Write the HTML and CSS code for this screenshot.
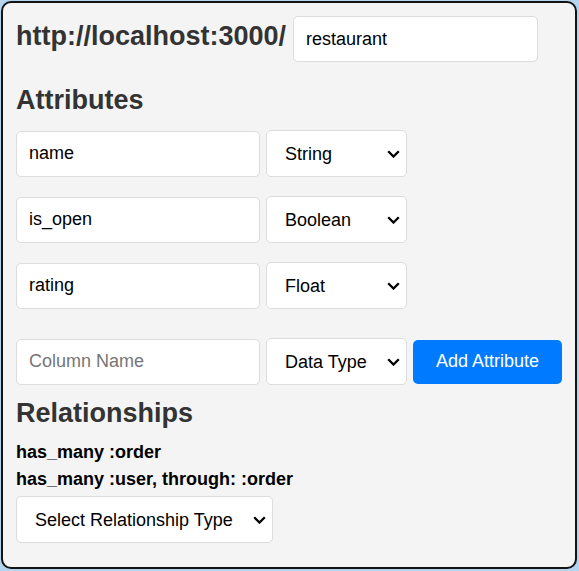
FILE: index.html
```html
<!DOCTYPE html>
<html lang="en">
<head>
<meta charset="utf-8">
<title>Model Editor</title>
<link rel="stylesheet" href="styles.css">
</head>
<body>
  <div class="card">
    <div class="title-row">
      <h1 class="url">http://localhost:3000/</h1>
      <input class="field model-name" type="text" value="restaurant">
    </div>

    <h2 class="heading attrs-heading">Attributes</h2>

    <div class="attr-row">
      <input class="field col-name" type="text" value="name">
      <span class="select-wrap type-wrap">
        <select class="field type-select">
          <option>String</option>
          <option>Boolean</option>
          <option>Float</option>
        </select>
        <svg class="chev" width="13" height="8" viewBox="0 0 13 8"><path d="M1.2 1.2 L6.5 6.5 L11.8 1.2" fill="none" stroke="#000" stroke-width="2.3"/></svg>
      </span>
    </div>
    <div class="attr-row">
      <input class="field col-name" type="text" value="is_open">
      <span class="select-wrap type-wrap">
        <select class="field type-select">
          <option>String</option>
          <option selected>Boolean</option>
          <option>Float</option>
        </select>
        <svg class="chev" width="13" height="8" viewBox="0 0 13 8"><path d="M1.2 1.2 L6.5 6.5 L11.8 1.2" fill="none" stroke="#000" stroke-width="2.3"/></svg>
      </span>
    </div>
    <div class="attr-row">
      <input class="field col-name" type="text" value="rating">
      <span class="select-wrap type-wrap">
        <select class="field type-select">
          <option>String</option>
          <option>Boolean</option>
          <option selected>Float</option>
        </select>
        <svg class="chev" width="13" height="8" viewBox="0 0 13 8"><path d="M1.2 1.2 L6.5 6.5 L11.8 1.2" fill="none" stroke="#000" stroke-width="2.3"/></svg>
      </span>
    </div>

    <div class="attr-row new-row">
      <input class="field col-name" type="text" placeholder="Column Name">
      <span class="select-wrap type-wrap">
        <select class="field type-select">
          <option>Data Type</option>
          <option>String</option>
          <option>Boolean</option>
          <option>Float</option>
        </select>
        <svg class="chev" width="13" height="8" viewBox="0 0 13 8"><path d="M1.2 1.2 L6.5 6.5 L11.8 1.2" fill="none" stroke="#000" stroke-width="2.3"/></svg>
      </span>
      <button class="add-btn" type="button">Add Attribute</button>
    </div>

    <h2 class="heading rel-heading">Relationships</h2>
    <div class="rel">has_many :order</div>
    <div class="rel">has_many :user, through: :order</div>

    <span class="select-wrap rel-wrap">
      <select class="field rel-select">
        <option>Select Relationship Type</option>
        <option>has_many</option>
        <option>belongs_to</option>
      </select>
      <svg class="chev" width="13" height="8" viewBox="0 0 13 8"><path d="M1.2 1.2 L6.5 6.5 L11.8 1.2" fill="none" stroke="#000" stroke-width="2.3"/></svg>
    </span>
  </div>
</body>
</html>
```

FILE: styles.css
```css
* {
  box-sizing: border-box;
}

html, body {
  margin: 0;
  padding: 0;
}

body {
  background: #b4d5ef;
  font-family: "Liberation Sans", Arial, sans-serif;
  padding: 1px 2px 2px 1px;
}

.card {
  height: 568px;
  background: #f4f4f4;
  border: 2px solid #141414;
  border-radius: 10px;
  padding: 13px 13px 13px 13px;
}

.title-row {
  display: flex;
  align-items: baseline;
  gap: 7px;
}

.url {
  margin: 0;
  font-size: 27px;
  font-weight: bold;
  color: #333;
}

.field {
  font-family: "Liberation Sans", Arial, sans-serif;
  font-size: 18px;
  color: #000;
  background: #fff;
  border: 1px solid #dcdcdc;
  border-radius: 5px;
  height: 46px;
  padding: 0 12px;
  outline: none;
}

.field::placeholder {
  color: #767676;
}

.model-name {
  width: 245px;
}

.heading {
  margin: 0;
  font-size: 27px;
  font-weight: bold;
  color: #333;
  line-height: 30px;
}

.attrs-heading {
  margin-top: 23px;
  margin-bottom: 15px;
}

.attr-row {
  display: flex;
  align-items: center;
  gap: 6px;
  margin-bottom: 19px;
}

.attr-row.new-row {
  margin-top: 29px;
  margin-bottom: 13px;
}

.col-name {
  width: 244px;
}

.select-wrap {
  position: relative;
  display: inline-flex;
}

.chev {
  position: absolute;
  right: 7px;
  top: 50%;
  margin-top: -4px;
  pointer-events: none;
}

.type-select,
.rel-select {
  appearance: none;
  -webkit-appearance: none;
  height: 47px;
  padding: 0 24px 0 18px;
}

.type-select {
  width: 141px;
}

.add-btn {
  width: 150px;
  height: 44px;
  background: #007bff;
  color: #fff;
  border: none;
  border-radius: 5px;
  font-family: "Liberation Sans", Arial, sans-serif;
  font-size: 18px;
}

.rel-heading {
  margin-bottom: 11px;
}

.rel {
  font-size: 18px;
  font-weight: bold;
  color: #000;
  line-height: 27px;
}

.rel-wrap {
  margin-top: 3px;
}

.rel-select {
  width: 257px;
}
```
